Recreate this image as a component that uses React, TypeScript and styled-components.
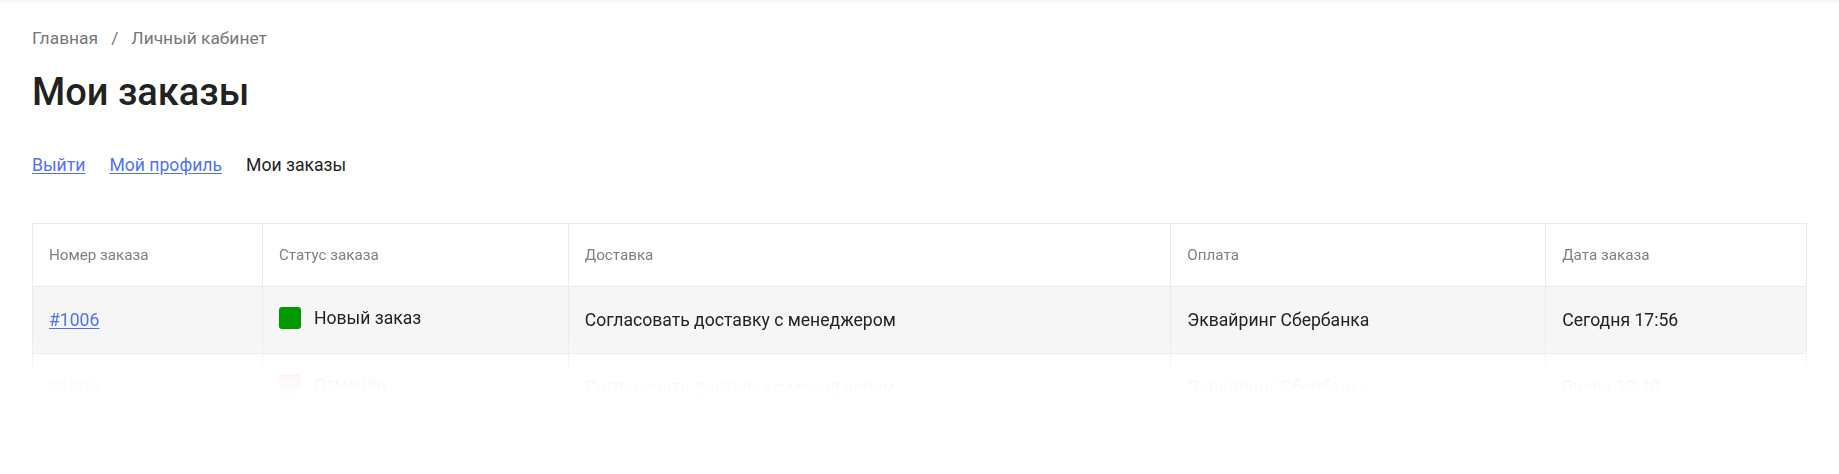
import React from "react";
import styled, { createGlobalStyle } from "styled-components";

const GlobalStyle = createGlobalStyle`
  html, body {
    margin: 0;
    padding: 0;
    background: #ffffff;
  }
  body {
    font-family: Roboto, "Noto Sans", Arial, sans-serif;
    color: #222222;
  }
`;

const Page = styled.div`
  min-height: 474px;
  padding: 27px 32px 0;
  box-sizing: border-box;
  box-shadow: inset 0 5px 5px -5px rgba(0, 0, 0, 0.09);
`;

const Breadcrumbs = styled.nav`
  display: flex;
  align-items: center;
  gap: 13px;
  font-size: 17.4px;
  line-height: 22px;
  color: #777777;
`;

const Crumb = styled.span`
  color: #777777;
`;

const Title = styled.h1`
  margin: 20px 0 0;
  font-size: 38px;
  line-height: 46px;
  font-weight: 500;
  color: #222222;
`;

const Tabs = styled.div`
  display: flex;
  gap: 24px;
  margin-top: 39px;
  font-size: 17.6px;
  line-height: 22px;
`;

const TabLink = styled.a<{ $active?: boolean }>`
  color: ${(p) => (p.$active ? "#222222" : "#4f72f2")};
  text-decoration: ${(p) => (p.$active ? "none" : "underline")};
  text-underline-offset: 2px;
  cursor: pointer;
`;

const fade =
  "linear-gradient(to bottom, #000 0, #000 115px, rgba(0,0,0,0.85) 130px, rgba(0,0,0,0.28) 142px, rgba(0,0,0,0.06) 152px, rgba(0,0,0,0.015) 166px, transparent 178px)";

const TableWrap = styled.div`
  margin-top: 47px;
  height: 190px;
  overflow: hidden;
  -webkit-mask-image: ${fade};
  mask-image: ${fade};
`;

const Table = styled.table`
  width: 100%;
  border-collapse: collapse;
  table-layout: fixed;
`;

const HeadCell = styled.th`
  height: 62px;
  padding: 0 16px;
  border: 1px solid #ebebeb;
  text-align: left;
  font-weight: 400;
  font-size: 15.2px;
  color: #808080;
`;

const Row = styled.tr<{ $shaded?: boolean }>`
  background: ${(p) => (p.$shaded ? "#f6f6f6" : "#ffffff")};
`;

const Cell = styled.td`
  height: 66px;
  padding: 0 16px;
  border: 1px solid #ebebeb;
  font-size: 17.6px;
  color: #222222;
  white-space: nowrap;
`;

const OrderLink = styled.a`
  color: #4f72f2;
  text-decoration: underline;
  text-underline-offset: 2px;
`;

const Status = styled.span`
  display: inline-flex;
  align-items: center;
  gap: 13px;
`;

const StatusDot = styled.span<{ $color: string }>`
  width: 22px;
  height: 22px;
  border-radius: 3px;
  background: ${(p) => p.$color};
  flex: none;
`;

const columns = [
  { title: "Номер заказа", width: "12.96%" },
  { title: "Статус заказа", width: "17.24%" },
  { title: "Доставка", width: "33.97%" },
  { title: "Оплата", width: "21.13%" },
  { title: "Дата заказа", width: "14.70%" },
];

const orders = [
  {
    id: "#1006",
    status: "Новый заказ",
    color: "#009a00",
    delivery: "Согласовать доставку с менеджером",
    payment: "Эквайринг Сбербанка",
    date: "Сегодня 17:56",
  },
  {
    id: "#1005",
    status: "Отменён",
    color: "#e0446a",
    delivery: "Согласовать доставку с менеджером",
    payment: "Эквайринг Сбербанка",
    date: "Вчера 12:40",
  },
];

export default function App() {
  return (
    <>
      <GlobalStyle />
      <Page>
        <Breadcrumbs>
          <Crumb>Главная</Crumb>
          <Crumb>/</Crumb>
          <Crumb>Личный кабинет</Crumb>
        </Breadcrumbs>
        <Title>Мои заказы</Title>
        <Tabs>
          <TabLink>Выйти</TabLink>
          <TabLink>Мой профиль</TabLink>
          <TabLink $active>Мои заказы</TabLink>
        </Tabs>
        <TableWrap>
          <Table>
            <colgroup>
              {columns.map((c) => (
                <col key={c.title} style={{ width: c.width }} />
              ))}
            </colgroup>
            <thead>
              <tr>
                {columns.map((c) => (
                  <HeadCell key={c.title}>{c.title}</HeadCell>
                ))}
              </tr>
            </thead>
            <tbody>
              {orders.map((o, i) => (
                <Row key={o.id} $shaded={i % 2 === 0}>
                  <Cell>
                    <OrderLink>{o.id}</OrderLink>
                  </Cell>
                  <Cell>
                    <Status>
                      <StatusDot $color={o.color} />
                      {o.status}
                    </Status>
                  </Cell>
                  <Cell>{o.delivery}</Cell>
                  <Cell>{o.payment}</Cell>
                  <Cell>{o.date}</Cell>
                </Row>
              ))}
            </tbody>
          </Table>
        </TableWrap>
      </Page>
    </>
  );
}
